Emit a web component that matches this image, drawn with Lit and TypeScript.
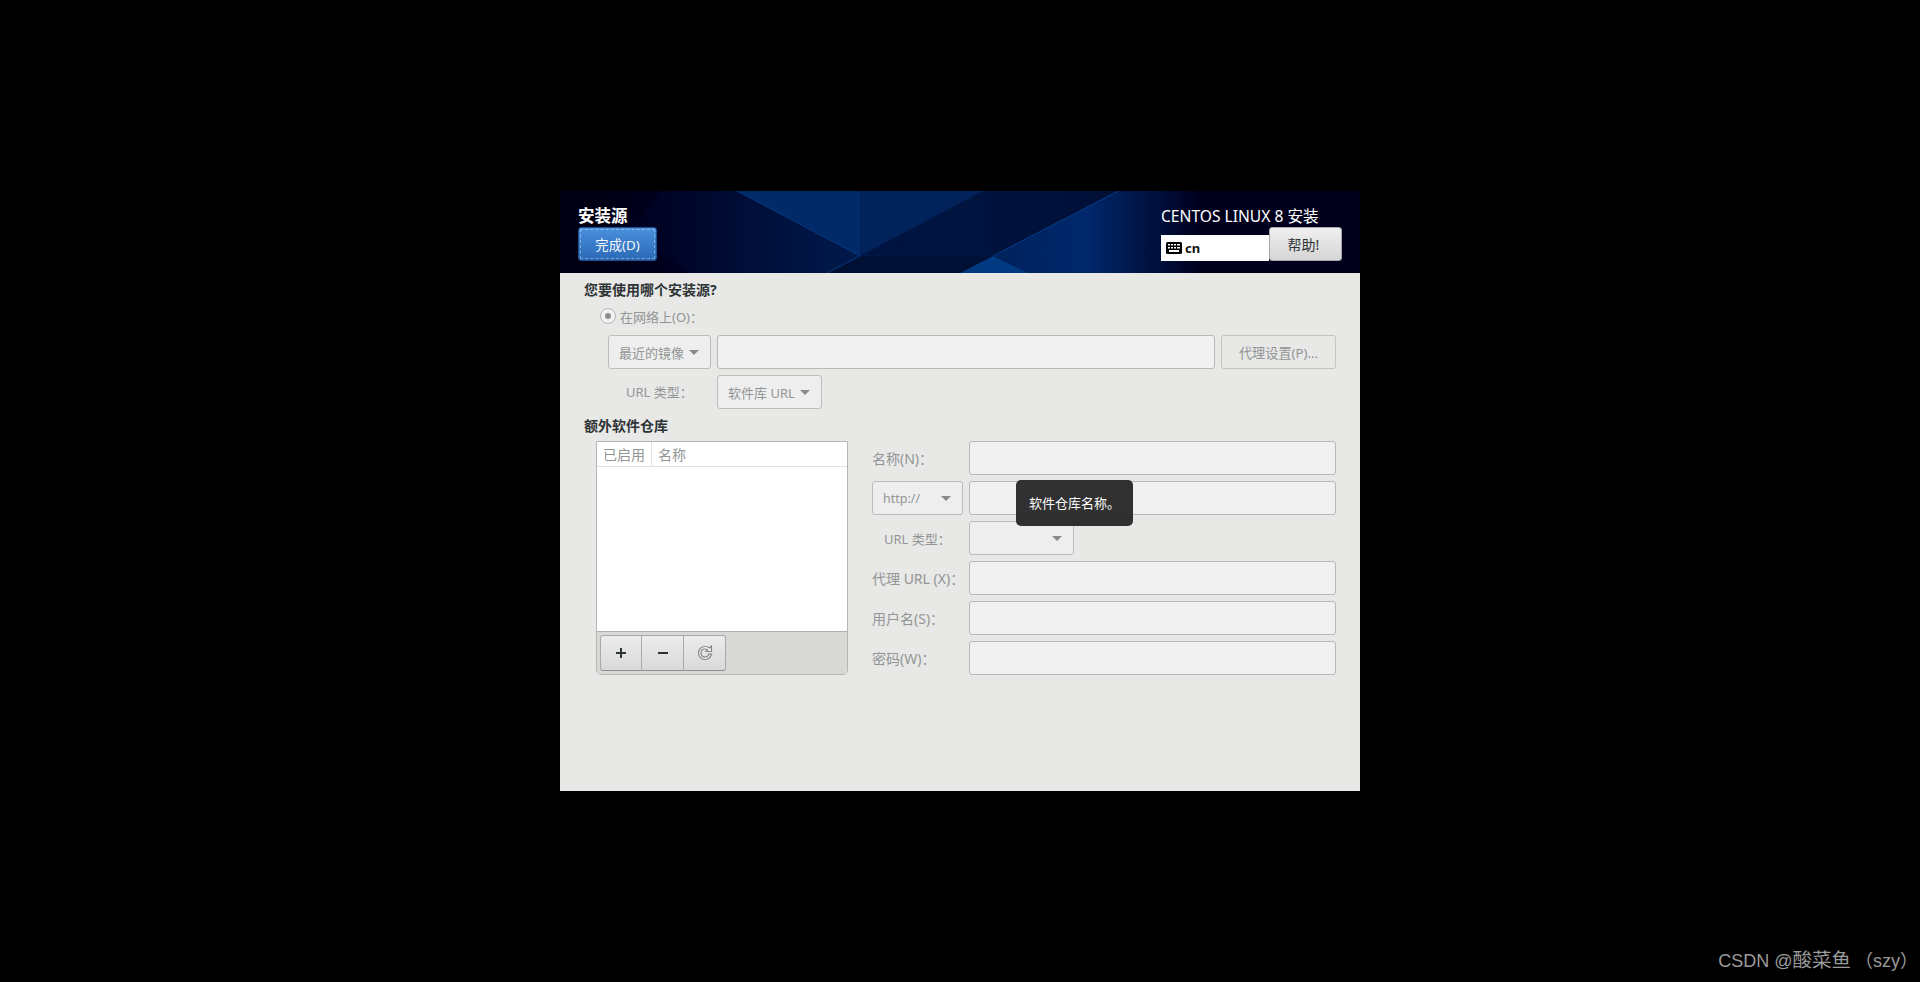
import { LitElement, html, css, svg } from "lit";
import { customElement } from "lit/decorators.js";

const bg = svg`<svg class="art" viewBox="0 0 800 82" preserveAspectRatio="none" aria-hidden="true">
  <defs>
    <linearGradient id="base" x1="0" x2="1" y1="0" y2="0">
      <stop offset="0" stop-color="#00000f"/><stop offset=".14" stop-color="#000020"/>
      <stop offset=".3" stop-color="#001240"/><stop offset=".5" stop-color="#001440"/>
      <stop offset=".7" stop-color="#000f36"/><stop offset=".8" stop-color="#00001e"/><stop offset="1" stop-color="#00001a"/>
    </linearGradient>
    <linearGradient id="fan" gradientUnits="userSpaceOnUse" x1="433" x2="640" y1="0" y2="0">
      <stop offset="0" stop-color="#00225c"/><stop offset=".45" stop-color="#00286c"/><stop offset="1" stop-color="#00001e"/>
    </linearGradient>
    <linearGradient id="left" gradientUnits="userSpaceOnUse" x1="60" x2="300" y1="0" y2="0">
      <stop offset="0" stop-color="#000020"/><stop offset="1" stop-color="#001c50"/>
    </linearGradient>
  </defs>
  <rect width="800" height="82" fill="url(#base)"/>
  <polygon points="0,0 45,0 45,82 0,82" fill="#000012"/>
  <polygon points="100,0 177,0 300,65 267,82 130,82 70,40" fill="url(#left)" opacity=".7"/>
  <polygon points="177,0 300,65 300,0" fill="#002a68"/>
  <polygon points="300,0 423,0 300,65" fill="#01225a"/>
  <polygon points="300,65 433,65 468,82 267,82" fill="#000f34"/>
  <polygon points="433,65 558,0 640,0 640,82 468,82" fill="url(#fan)"/>
  <polygon points="433,65 468,82 400,82" fill="#013a80"/>
  <line x1="177" y1="0" x2="300" y2="65" stroke="#083f88" stroke-width=".8"/>
  <line x1="300" y1="65" x2="267" y2="82" stroke="#083f88" stroke-width=".8"/>
  <line x1="433" y1="65" x2="558" y2="0" stroke="#084494" stroke-width=".8"/>
  <line x1="300" y1="65" x2="433" y2="65" stroke="#001e52" stroke-width=".6"/>
  <polygon points="640,0 800,0 800,82 640,82" fill="#00001c"/>
</svg>`;

const keyboard = svg`<svg class="kbd" viewBox="0 0 16 12" aria-hidden="true">
  <rect width="16" height="12" rx="1.5" fill="#000"/>
  <g fill="#fff">
    <rect x="2" y="2" width="2" height="1.5"/><rect x="5" y="2" width="2" height="1.5"/><rect x="8" y="2" width="2" height="1.5"/><rect x="11" y="2" width="3" height="1.5"/>
    <rect x="2" y="5" width="2" height="1.5"/><rect x="5" y="5" width="2" height="1.5"/><rect x="8" y="5" width="2" height="1.5"/><rect x="11" y="5" width="3" height="1.5"/>
    <rect x="3" y="8" width="10" height="2"/>
  </g>
</svg>`;

const refresh = svg`<svg class="refresh" viewBox="0 0 16 16" aria-hidden="true">
  <path d="M8 1.5a6.5 6.5 0 1 0 6.4 7.6h-2.6A4 4 0 1 1 8 4c1 0 1.9.4 2.6 1L9 6.5h5.5V1l-2 2A6.5 6.5 0 0 0 8 1.5z" fill="#f4f4f4" stroke="#858787" stroke-width="1.2"/>
</svg>`;

@customElement("app-root")
export class AppRoot extends LitElement {
  static styles = css`
    :host {
      display: block;
      height: 982px;
      background: #000;
      position: relative;
      overflow: hidden;
      font-family: "Noto Sans", "Noto Sans CJK SC", sans-serif;
      font-size: 13px;
    }
    .stage { padding: 191px 0 0 560px; }
    .window { width: 800px; height: 600px; display: flex; flex-direction: column; background: #e8e8e7; }

    .header {
      position: relative; height: 82px; box-sizing: border-box; flex: none;
      padding: 15px 18px 0; display: flex; justify-content: space-between; color: #fff;
    }
    .art { position: absolute; inset: 0; width: 100%; height: 100%; }
    .hleft, .hright { position: relative; display: flex; flex-direction: column; }
    .hright { width: 181px; }
    .title { height: 21px; line-height: 20px; font-size: 16.5px; font-weight: 700; }
    .product { height: 21px; line-height: 21px; font-size: 15.6px; white-space: nowrap; }
    .done {
      width: 79px; height: 34px; box-sizing: border-box; display: flex; align-items: center; justify-content: center;
      border: 1px solid #1c4f8c; border-radius: 3px; color: #f4f8fc;
      background: linear-gradient(#4a90dd, #2a69b5);
      outline: 1px dashed rgba(255, 255, 255, .38); outline-offset: -3px; font-size: 13.3px;
    }
    .kb-row { display: flex; align-items: flex-end; }
    .kb {
      width: 108px; height: 26px; box-sizing: border-box; background: #fff; color: #111; font-weight: 700;
      display: flex; align-items: center; gap: 3px; padding-left: 5px; font-size: 13px;
    }
    .kbd { width: 16px; height: 12px; }
    .help {
      width: 73px; height: 34px; box-sizing: border-box; display: flex; align-items: center; justify-content: center;
      color: #2e3436; background: linear-gradient(#efefef, #d5d5d5); font-size: 14px; padding-right: 4px;
      border: 1px solid #a8a8a8; border-radius: 3px;
    }

    .body { flex: 1; padding: 7px 24px 0; display: flex; flex-direction: column; color: #929595; }
    .heading { height: 20px; line-height: 20px; font-size: 14px; font-weight: 700; color: #2e3436; }
    .radio-row { margin: 6px 0 9px 16px; height: 20px; display: flex; align-items: center; gap: 4px; }
    .radio {
      width: 14px; height: 14px; border-radius: 50%; border: 1px solid #b5b5b5; background: #f1f1f1;
      display: flex; align-items: center; justify-content: center;
    }
    .radio::after { content: ""; width: 6px; height: 6px; border-radius: 50%; background: #8d8f8f; }
    .source { margin-left: 24px; display: grid; grid-template-columns: 103px 1fr 115px; column-gap: 6px; }
    .type-row { margin: 6px 0 7px 24px; display: grid; grid-template-columns: 103px 105px; column-gap: 6px; align-items: center; }
    .type-row .label { padding-left: 18px; padding-bottom: 1px; }

    .field, .select, .btn {
      height: 34px; box-sizing: border-box; border-radius: 3px; border: 1px solid #b8b8b6;
    }
    .field { background: #f1f1f1; }
    .select {
      background: #eeeeee; display: flex; align-items: center; justify-content: space-between;
      padding: 0 11px 0 10px; border-color: #bcbcba; white-space: nowrap;
    }
    .caret { width: 0; height: 0; flex: none; border: 5px solid transparent; border-top: 5px solid #888a8a; border-bottom: 0; }
    .select.empty { justify-content: flex-end; }
    .btn { background: #e8e8e7; border-color: #c4c4c2; display: flex; align-items: center; justify-content: center; font-size: 13.2px; }

    .repos { margin-top: 5px; display: grid; grid-template-columns: 252px 464px; column-gap: 24px; margin-left: 12px; }
    .list {
      height: 234px; box-sizing: border-box; background: #fff; border: 1px solid #b5b5b3;
      border-radius: 0 0 5px 5px; display: flex; flex-direction: column; overflow: hidden;
    }
    .list-head { height: 25px; flex: none; display: flex; border-bottom: 1px solid #e2e2e2; box-sizing: border-box; font-size: 14px; }
    .list-head span { display: flex; align-items: center; padding-left: 6px; padding-bottom: 1px; }
    .list-head .on { width: 55px; box-sizing: border-box; border-right: 1px solid #e2e2e2; }
    .list-body { flex: 1; }
    .toolbar { flex: none; height: 43px; box-sizing: border-box; background: #d8d8d7; border-top: 1px solid #b0b0ae; padding: 3px; }
    .linked { display: inline-flex; height: 36px; }
    .tool {
      width: 42px; box-sizing: border-box; display: flex; align-items: center; justify-content: center;
      background: linear-gradient(#ececec, #d9d9d9);
      border: 1px solid #a9a9a7; border-left: 0; border-bottom-color: #8f8f8d; color: #2e3436;
    }
    .tool:first-child { border-left: 1px solid #a9a9a7; border-radius: 3px 0 0 3px; }
    .tool:last-child { border-radius: 0 3px 3px 0; }
    .tool svg.sym { width: 12px; height: 12px; }
    .refresh { width: 16px; height: 16px; }

    .repo-form {
      position: relative; display: grid; grid-template-columns: 91px 1fr; grid-auto-rows: 34px;
      column-gap: 6px; row-gap: 6px; align-items: center;
    }
    .repo-form > .text { font-size: 14px; padding-bottom: 1px; white-space: nowrap; }
    .repo-form > .indent { font-size: 13px; padding-left: 12px; padding-bottom: 0; }
    .repo-form .narrow { width: 105px; }
    .http { font-size: 12.5px; }
    .tooltip {
      position: absolute; left: 144px; top: 39px; width: 117px; height: 46px; box-sizing: border-box;
      display: flex; align-items: center; padding: 0 0 1px 13px; font-size: 13px; color: #fff;
      background: rgba(38, 38, 38, .95); border-radius: 5px; white-space: nowrap;
    }
    .watermark {
      position: absolute; right: 2px; bottom: 9px; color: #9a9a9a; font-size: 18px; text-spacing-trim: space-all;
      font-family: "Liberation Sans", "Noto Sans CJK SC", sans-serif; white-space: nowrap;
    }
    .watermark .cjk { font-size: 19.5px; margin-right: 4px; }
  `;

  render() {
    return html`
      <div class="stage">
        <div class="window">
          <div class="header">
            ${bg}
            <div class="hleft">
              <div class="title">安装源</div>
              <div class="done">完成(D)</div>
            </div>
            <div class="hright">
              <div class="product">CENTOS LINUX 8 安装</div>
              <div class="kb-row">
                <div class="kb">${keyboard}<span>cn</span></div>
                <div class="help">帮助!</div>
              </div>
            </div>
          </div>
          <div class="body">
            <div class="heading">您要使用哪个安装源?</div>
            <div class="radio-row"><span class="radio"></span><span>在网络上(O)：</span></div>
            <div class="source">
              <div class="select"><span>最近的镜像</span><span class="caret"></span></div>
              <div class="field"></div>
              <div class="btn">代理设置(P)...</div>
            </div>
            <div class="type-row">
              <span class="label">URL 类型：</span>
              <div class="select"><span>软件库 URL</span><span class="caret"></span></div>
            </div>
            <div class="heading">额外软件仓库</div>
            <div class="repos">
              <div class="list">
                <div class="list-head"><span class="on">已启用</span><span>名称</span></div>
                <div class="list-body"></div>
                <div class="toolbar">
                  <div class="linked">
                    <div class="tool"><svg class="sym" viewBox="0 0 12 12"><path d="M5 1h2v4h4v2H7v4H5V7H1V5h4z" fill="#2e3436"/></svg></div>
                    <div class="tool"><svg class="sym" viewBox="0 0 12 12"><path d="M1 5h10v2H1z" fill="#2e3436"/></svg></div>
                    <div class="tool">${refresh}</div>
                  </div>
                </div>
              </div>
              <div class="repo-form">
                <span class="text">名称(N)：</span><div class="field"></div>
                <div class="select http"><span>http://</span><span class="caret"></span></div><div class="field"></div>
                <span class="text indent">URL 类型：</span><div class="select empty narrow"><span class="caret"></span></div>
                <span class="text">代理 URL (X)：</span><div class="field"></div>
                <span class="text">用户名(S)：</span><div class="field"></div>
                <span class="text">密码(W)：</span><div class="field"></div>
                <div class="tooltip">软件仓库名称。</div>
              </div>
            </div>
          </div>
        </div>
      </div>
      <div class="watermark">CSDN @<span class="cjk">酸菜鱼</span>（szy）</div>
    `;
  }
}
